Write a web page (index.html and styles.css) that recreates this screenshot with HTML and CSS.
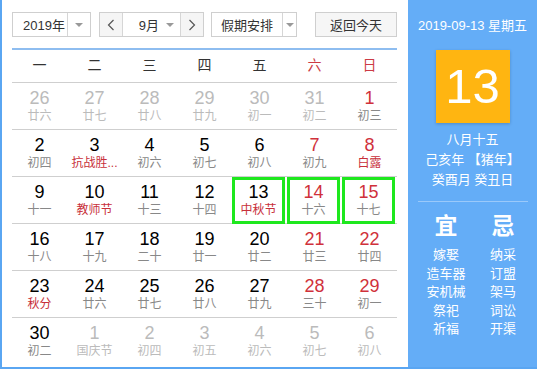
FILE: index.html
```html
<!DOCTYPE html>
<html lang="zh-CN">
<head>
    <meta charset="UTF-8">
    <title>万年历</title>
    <link rel="stylesheet" href="styles.css">
</head>
<body>
    <div class="wrap">
        <div class="main">
            <div class="bar">
                <div class="box year">
                    <span class="val">2019年</span>
                    <span class="drop"><i class="tri"></i></span>
                </div>
                <div class="box month">
                    <span class="nav"><svg width="8" height="12" viewBox="0 0 8 12"><polyline points="6.5,1 1.5,6 6.5,11" fill="none" stroke="#555" stroke-width="1.2"/></svg></span>
                    <span class="val">9月</span>
                    <span class="drop2"><i class="tri"></i></span>
                    <span class="nav nav-r"><svg width="8" height="12" viewBox="0 0 8 12"><polyline points="1.5,1 6.5,6 1.5,11" fill="none" stroke="#555" stroke-width="1.2"/></svg></span>
                </div>
                <div class="box holiday">
                    <span class="val">假期安排</span>
                    <span class="drop"><i class="tri"></i></span>
                </div>
                <div class="box today">返回今天</div>
            </div>

            <div class="weekdays">
                <span>一</span><span>二</span><span>三</span><span>四</span><span>五</span><span class="red">六</span><span class="red">日</span>
            </div>

            <div class="week">
                <div class="cell other"><b>26</b><em>廿六</em></div>
                <div class="cell other"><b>27</b><em>廿七</em></div>
                <div class="cell other"><b>28</b><em>廿八</em></div>
                <div class="cell other"><b>29</b><em>廿九</em></div>
                <div class="cell other"><b>30</b><em>初一</em></div>
                <div class="cell other"><b>31</b><em>初二</em></div>
                <div class="cell rest"><b>1</b><em>初三</em></div>
            </div>
            <div class="week">
                <div class="cell"><b>2</b><em>初四</em></div>
                <div class="cell"><b>3</b><em class="fest">抗战胜...</em></div>
                <div class="cell"><b>4</b><em>初六</em></div>
                <div class="cell"><b>5</b><em>初七</em></div>
                <div class="cell"><b>6</b><em>初八</em></div>
                <div class="cell rest"><b>7</b><em>初九</em></div>
                <div class="cell rest"><b>8</b><em class="fest">白露</em></div>
            </div>
            <div class="week">
                <div class="cell"><b>9</b><em>十一</em></div>
                <div class="cell"><b>10</b><em class="fest">教师节</em></div>
                <div class="cell"><b>11</b><em>十三</em></div>
                <div class="cell"><b>12</b><em>十四</em></div>
                <div class="cell sel"><b>13</b><em class="fest">中秋节</em></div>
                <div class="cell sel rest"><b>14</b><em>十六</em></div>
                <div class="cell sel rest"><b>15</b><em>十七</em></div>
            </div>
            <div class="week">
                <div class="cell"><b>16</b><em>十八</em></div>
                <div class="cell"><b>17</b><em>十九</em></div>
                <div class="cell"><b>18</b><em>二十</em></div>
                <div class="cell"><b>19</b><em>廿一</em></div>
                <div class="cell"><b>20</b><em>廿二</em></div>
                <div class="cell rest"><b>21</b><em>廿三</em></div>
                <div class="cell rest"><b>22</b><em>廿四</em></div>
            </div>
            <div class="week">
                <div class="cell"><b>23</b><em class="fest">秋分</em></div>
                <div class="cell"><b>24</b><em>廿六</em></div>
                <div class="cell"><b>25</b><em>廿七</em></div>
                <div class="cell"><b>26</b><em>廿八</em></div>
                <div class="cell"><b>27</b><em>廿九</em></div>
                <div class="cell rest"><b>28</b><em>三十</em></div>
                <div class="cell rest"><b>29</b><em>初一</em></div>
            </div>
            <div class="week">
                <div class="cell"><b>30</b><em>初二</em></div>
                <div class="cell other"><b>1</b><em>国庆节</em></div>
                <div class="cell other"><b>2</b><em>初四</em></div>
                <div class="cell other"><b>3</b><em>初五</em></div>
                <div class="cell other"><b>4</b><em>初六</em></div>
                <div class="cell other"><b>5</b><em>初七</em></div>
                <div class="cell other"><b>6</b><em>初八</em></div>
            </div>
        </div>

        <div class="side">
            <div class="s-date">2019-09-13 星期五</div>
            <div class="s-day">13</div>
            <div class="s-lunar">
                <div>八月十五</div>
                <div>己亥年 【猪年】</div>
                <div>癸酉月 癸丑日</div>
            </div>
            <div class="s-sep"></div>
            <div class="yiji">
                <div class="col">
                    <div class="head">宜</div>
                    <div>嫁娶</div>
                    <div>造车器</div>
                    <div>安机械</div>
                    <div>祭祀</div>
                    <div>祈福</div>
                </div>
                <div class="col">
                    <div class="head">忌</div>
                    <div>纳采</div>
                    <div>订盟</div>
                    <div>架马</div>
                    <div>词讼</div>
                    <div>开渠</div>
                </div>
            </div>
        </div>
    </div>
</body>
</html>
```

FILE: styles.css
```css
html, body {
    margin: 0;
    padding: 0;
}
body {
    font-family: "Liberation Sans", "Noto Sans CJK SC", sans-serif;
    color: #333;
    background: #fff;
}
.wrap {
    display: flex;
    width: 537px;
    height: 369px;
    box-sizing: border-box;
    border-left: 2px solid #5aa6f2;
    border-bottom: 2px solid #5aa6f2;
}
.main {
    width: 406px;
    padding: 12px 11px 0 10px;
    box-sizing: border-box;
}
.bar {
    display: flex;
    height: 25px;
    font-size: 13px;
}
.box {
    display: flex;
    align-items: center;
    height: 25px;
    box-sizing: border-box;
    border: 1px solid #cfcfcf;
    background: #fff;
}
.year {
    width: 79px;
}
.year .val {
    width: 54px;
    padding-left: 10px;
    box-sizing: border-box;
}
.drop {
    flex: 1;
    height: 100%;
    border-left: 1px solid #d6d6d6;
    display: flex;
    align-items: center;
    justify-content: center;
}
.tri {
    width: 0;
    height: 0;
    border-left: 4px solid transparent;
    border-right: 4px solid transparent;
    border-top: 4px solid #999;
}
.month {
    width: 105px;
    margin-left: 8px;
}
.nav {
    width: 22px;
    height: 100%;
    background: #f5f5f5;
    display: flex;
    align-items: center;
    justify-content: center;
    border-right: 1px solid #d6d6d6;
}
.nav-r {
    border-right: 0;
    border-left: 1px solid #d6d6d6;
}
.month .val {
    width: 36px;
    text-align: right;
}
.drop2 {
    flex: 1;
    display: flex;
    justify-content: center;
}
.holiday {
    width: 86px;
    margin-left: 7px;
}
.holiday .val {
    width: 70px;
    text-align: center;
}
.today {
    width: 82px;
    margin-left: 18px;
    background: #f6f6f6;
    justify-content: center;
}
.weekdays {
    display: grid;
    grid-template-columns: repeat(7, 55px);
    margin-top: 11px;
    border-top: 2px solid #8ebdf0;
    height: 32px;
    line-height: 30px;
    font-size: 14px;
    text-align: center;
    color: #333;
}
.red {
    color: #cc3b45;
}
.week {
    display: grid;
    grid-template-columns: repeat(7, 55px);
    border-top: 1px solid #cfcfcf;
    height: 46px;
}
.cell {
    text-align: center;
    padding-top: 5px;
    box-sizing: border-box;
}
.cell b {
    display: block;
    font-weight: normal;
    font-size: 18px;
    line-height: 20px;
    color: #000;
}
.cell em {
    display: block;
    font-style: normal;
    font-size: 12px;
    line-height: 16px;
    color: #888;
}
.cell.rest b {
    color: #d0313b;
}
.cell em.fest {
    color: #c8303a;
}
.cell.other b {
    color: #bbb;
}
.cell.other em {
    color: #bbb;
}
.cell.sel {
    margin: 0 2px -1px 0;
    box-shadow: inset 0 0 0 3px #1ee81e;
}
.side {
    flex: 1;
    background: #64adf7;
    color: #fff;
    display: flex;
    flex-direction: column;
    align-items: center;
}
.s-date {
    margin-top: 17px;
    font-size: 13px;
    line-height: 18px;
}
.s-day {
    margin-top: 15px;
    width: 74px;
    height: 73px;
    background: #ffb511;
    box-shadow: 0 1px 3px rgba(0, 0, 0, 0.2);
    font-size: 49px;
    line-height: 73px;
    text-align: center;
}
.s-lunar {
    margin-top: 7px;
    font-size: 13px;
    line-height: 20px;
    text-align: center;
}
.s-sep {
    margin-top: 11px;
    width: 110px;
    height: 1px;
    background: rgba(255, 255, 255, 0.35);
}
.yiji {
    display: flex;
    margin-top: 11px;
    margin-left: 4px;
}
.col {
    width: 57px;
    text-align: center;
    font-size: 13px;
    line-height: 18.5px;
}
.col .head {
    font-size: 23px;
    font-weight: bold;
    line-height: 26px;
    margin-bottom: 7px;
}
```
